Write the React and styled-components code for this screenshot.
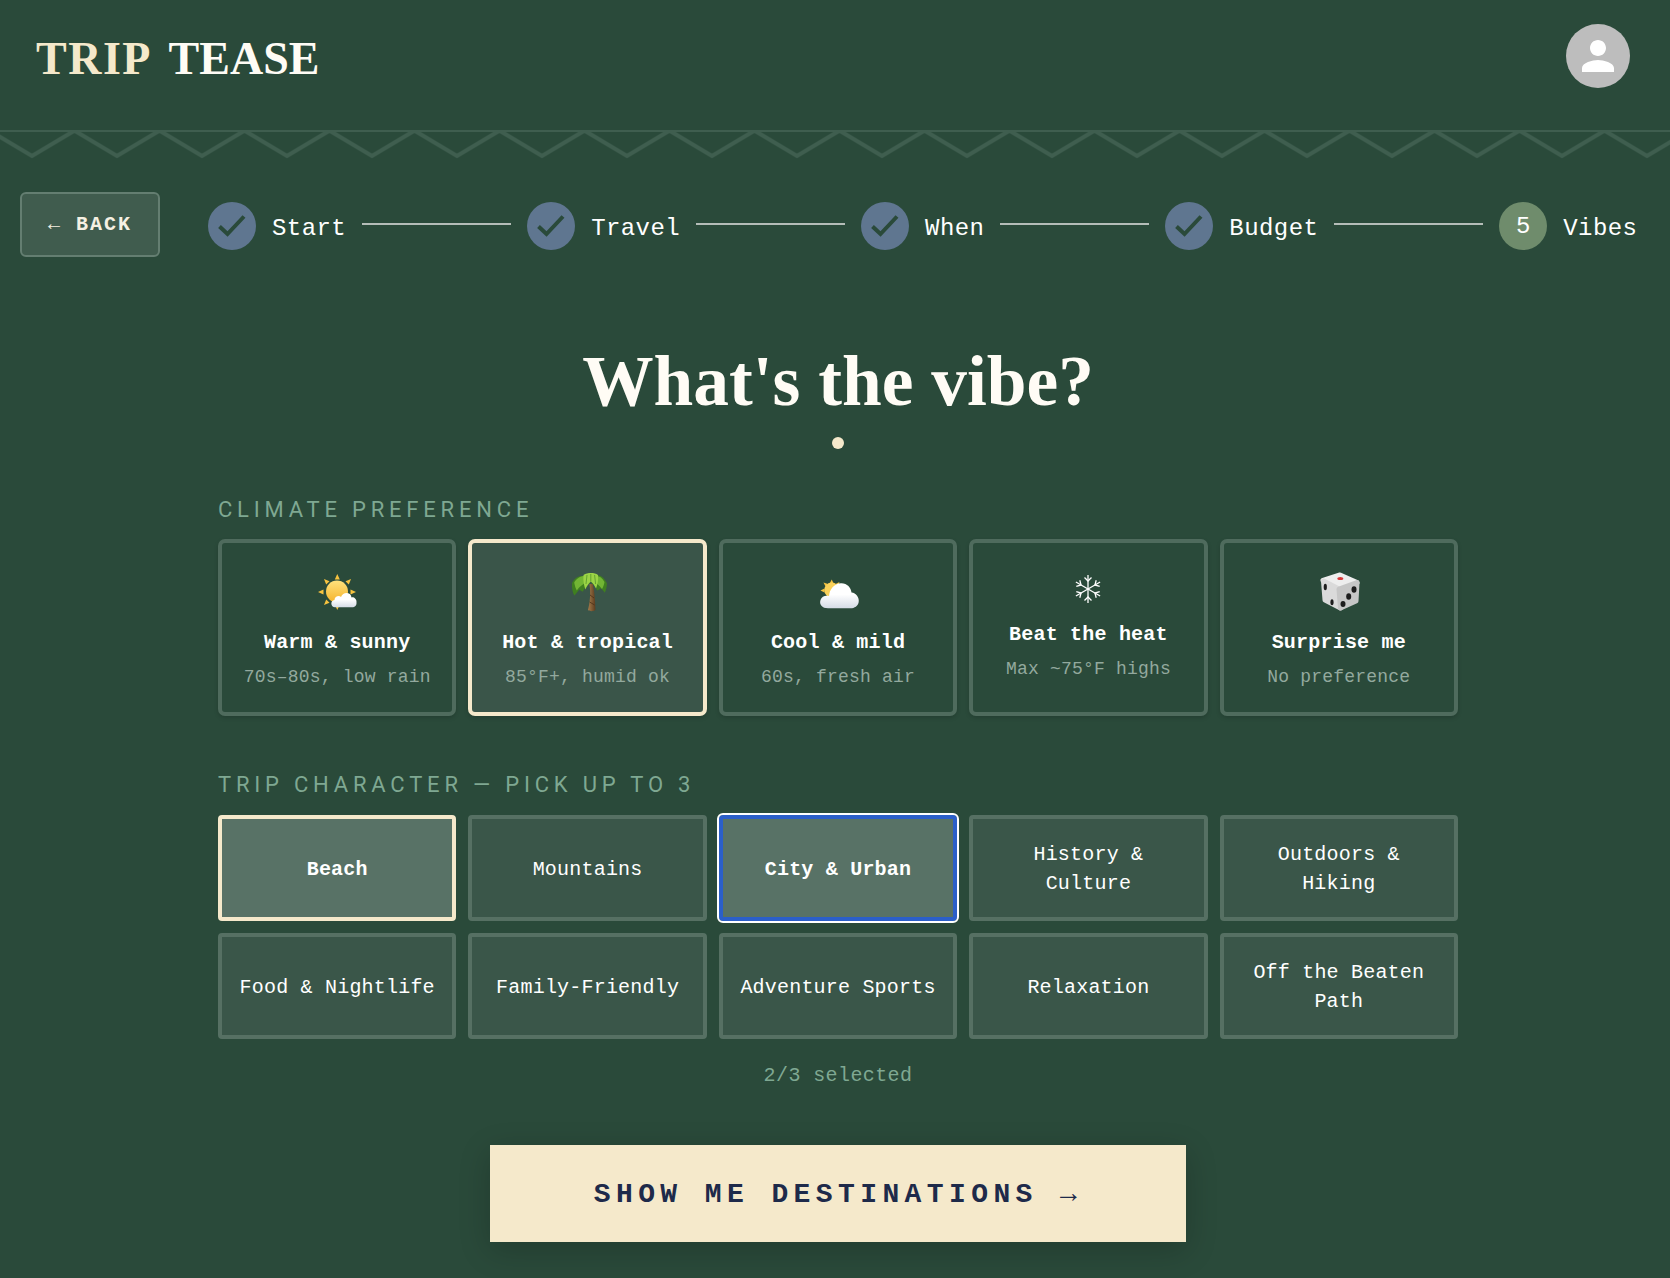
import styled, { createGlobalStyle } from "styled-components";

const MONO = '"Liberation Mono", "DejaVu Sans Mono", monospace';
const SERIF = '"Liberation Serif", serif';

const CloudDefs = ({ id }) => (
  <linearGradient id={id} x1="0" y1="0" x2="0" y2="1">
    <stop offset="0.45" stopColor="#ffffff" />
    <stop offset="1" stopColor="#d5dce6" />
  </linearGradient>
);

const SunCloudIcon = () => (
  <svg width="60" height="55" viewBox="-3 0 60 55">
    <defs>
      <linearGradient id="sunA" x1="0" y1="0" x2="0" y2="1">
        <stop offset="0" stopColor="#ffe27d" />
        <stop offset="1" stopColor="#f5b32b" />
      </linearGradient>
      <CloudDefs id="cloudA" />
    </defs>
    <g fill="#f7c33f">
      <path d="M27.3 9 L24.8 14.5 L29.8 14.5Z" />
      <path d="M14 14 L16.2 19.5 L19.5 16.2Z" />
      <path d="M41 14 L35.5 16.2 L38.8 19.5Z" />
      <path d="M8 27 L13.5 24.5 L13.5 29.5Z" />
      <path d="M46 27 L40.5 24.5 L40.5 29.5Z" />
      <path d="M14 40 L19.5 37.8 L16.2 34.5Z" />
      <path d="M27.3 45 L24.8 39.5 L29.8 39.5Z" />
    </g>
    <circle cx="27" cy="26.5" r="11" fill="url(#sunA)" />
    <path
      d="M25 42.3 C20.5 42.3 20 35.5 24.5 35 C24.5 31.5 29 30 31 32 C33 26.5 41 27 41.5 32.5 C43 31.5 47 33.5 46.5 37.5 C46.8 40.5 45 42.3 42 42.3Z"
      fill="url(#cloudA)"
    />
  </svg>
);

const PalmIcon = () => (
  <svg width="60" height="55" viewBox="-3 0 60 55">
    <defs>
      <linearGradient id="trunk" x1="0" y1="0" x2="1" y2="0">
        <stop offset="0" stopColor="#a57c4b" />
        <stop offset="1" stopColor="#5c3c1f" />
      </linearGradient>
    </defs>
    <path d="M28.4 19 C30 28 28.8 38 27 45 C28.6 46.6 32.5 46.6 34.4 45 C34.2 36 33.6 27 31.8 19Z" fill="url(#trunk)" />
    <path d="M29 30 L33 33 M28.6 37 L33.6 40" stroke="#4a3018" strokeWidth="0.8" fill="none" />
    <path d="M28 13 C21 9 14.5 11 11 18 C10.6 23 11.6 27.5 13.3 30.4 C15.5 28.5 17 26 18.5 24.5 C20 26 21 26.5 22 26.6 C23.5 23 26 20 29 18Z" fill="#3f7f20" />
    <path d="M28 12 C22 9.5 16.5 12 13.2 17.5 C13.8 20.5 14.6 23.5 15.8 25.5 C18 22 23 18 28 16Z" fill="#72b534" />
    <path d="M31 13 C36 8 42 10 46 18.5 C45.8 22 45 25 43.8 27.8 C42.2 25.5 40.8 24 39.5 23.2 C38.5 24.5 37.2 25.2 36 25.4 C35 22 33 19.5 30.5 18Z" fill="#3f7f20" />
    <path d="M31 12.5 C36 9.5 40.5 11.5 43.5 17 C43 20 42 22.5 41 24 C38.5 20.5 35 17.5 31 16Z" fill="#72b534" />
    <path d="M22.5 10 C26.5 7.4 33.5 7.4 37 10 C37.6 15 36.5 19.5 35 23.5 C33.8 21 32.2 18.5 29.8 16.5 C27.4 18.5 25.6 21.5 24.4 24.5 C22.8 20 22 15 22.5 10Z" fill="#9bd346" />
    <path d="M29.8 9 L29.8 16.5 M26 10 L25 19 M33.6 10 L34.6 19" stroke="#5c9e2c" strokeWidth="0.9" fill="none" />
  </svg>
);

const CloudSunIcon = () => (
  <svg width="60" height="55" viewBox="-3 0 60 55">
    <defs>
      <CloudDefs id="cloudB" />
    </defs>
    <g fill="#f7c33f">
      <path d="M20.7 14.5 L18.7 18.5 L22.7 18.5Z" />
      <path d="M12.5 17.5 L14.5 21.5 L17 19Z" />
      <path d="M28.5 17 L24.5 19 L27 21.5Z" />
      <path d="M9.5 25.5 L13.5 23.5 L13.5 27.5Z" />
    </g>
    <circle cx="20.7" cy="25" r="7.5" fill="#fbd25a" />
    <path
      d="M17 43.3 C11 43.3 8 39.5 9.5 35 C10.5 31.5 14.5 30 18 31 C18.5 24.5 23 18.5 30 18.2 C36 18 40 22.5 40.5 27.5 C45 28 48.5 32.5 47.7 37 C47 41 43.5 43.3 39.5 43.3Z"
      fill="url(#cloudB)"
    />
  </svg>
);

const SnowIcon = () => (
  <svg width="30" height="37" viewBox="0 0 30 37" fill="none" stroke="#fff" strokeWidth="1.3">
    {[0, 60, 120].map((a) => (
      <g key={a} transform={`rotate(${a} 15 15)`}>
        <path d="M15 1 V29" />
        <path d="M11.5 3.5 L15 7 L18.5 3.5" />
        <path d="M11.5 26.5 L15 23 L18.5 26.5" />
      </g>
    ))}
  </svg>
);

const DiceIcon = () => (
  <svg width="60" height="55" viewBox="-3 0 60 55">
    <g strokeLinejoin="round" strokeWidth="5">
      <path d="M28 10 L11 15.5 L27 24 L45 17.5Z" fill="#eeeeee" stroke="#eeeeee" />
      <path d="M11.5 16 L27 24 L28.5 43 L13 35Z" fill="#dadada" stroke="#dadada" />
      <path d="M27 24 L45 17.5 L44 36 L28.5 43Z" fill="#c6c6c6" stroke="#c6c6c6" />
    </g>
    <ellipse cx="28.3" cy="13.5" rx="3" ry="1.6" fill="#d93a3a" />
    <g fill="#1d1d1d">
      <ellipse cx="13.3" cy="22" rx="1.6" ry="3.2" />
      <ellipse cx="20" cy="37.3" rx="1.6" ry="3" />
      <ellipse cx="42" cy="24.5" rx="2.5" ry="3.2" />
      <ellipse cx="36.7" cy="31.5" rx="2.5" ry="3.2" />
      <ellipse cx="31" cy="39" rx="2.5" ry="3" />
    </g>
  </svg>
);

const steps = ["Start", "Travel", "When", "Budget"];

const climates = [
  { icon: <SunCloudIcon />, title: "Warm & sunny", sub: "70s–80s, low rain" },
  { icon: <PalmIcon />, title: "Hot & tropical", sub: "85°F+, humid ok", selected: true },
  { icon: <CloudSunIcon />, title: "Cool & mild", sub: "60s, fresh air" },
  { icon: <SnowIcon />, title: "Beat the heat", sub: "Max ~75°F highs", small: true },
  { icon: <DiceIcon />, title: "Surprise me", sub: "No preference" },
];

const characters = [
  { label: "Beach", selected: true },
  { label: "Mountains" },
  { label: "City & Urban", selected: true, focused: true },
  { label: "History & Culture" },
  { label: "Outdoors & Hiking" },
  { label: "Food & Nightlife" },
  { label: "Family-Friendly" },
  { label: "Adventure Sports" },
  { label: "Relaxation" },
  { label: "Off the Beaten Path" },
];

const App = () => {
  return (
    <>
      <GlobalStyle />
      <Header>
        <Logo>
          <LogoAccent>TRIP</LogoAccent> TEASE
        </Logo>
        <Avatar>
          <svg width="48" height="48" viewBox="0 0 24 24" fill="#fff">
            <path d="M12 12c2.21 0 4-1.79 4-4s-1.79-4-4-4-4 1.79-4 4 1.79 4 4 4zm0 2c-2.67 0-8 1.34-8 4v2h16v-2c0-2.66-5.33-4-8-4z" />
          </svg>
        </Avatar>
      </Header>
      <ZigzagStrip>
        <svg width="100%" height="28">
          <defs>
            <pattern id="zig" width="85" height="28" x="-10.5" patternUnits="userSpaceOnUse">
              <path d="M-2 -1.6 L42.5 25 L87 -1.6" fill="none" stroke="#3f5e4f" strokeWidth="4" />
            </pattern>
          </defs>
          <rect width="100%" height="28" fill="url(#zig)" />
        </svg>
      </ZigzagStrip>

      <StepperRow>
        <BackButton>← BACK</BackButton>
        <Stepper>
          {steps.map((s) => (
            <Step key={s}>
              <StepCircle>
                <svg width="28" height="22" viewBox="0 0 28 22" fill="none">
                  <path d="M1.5 11.5 L9.5 19 L26 1.5" stroke="#2a4a3a" strokeWidth="4" />
                </svg>
              </StepCircle>
              <StepLabel>{s}</StepLabel>
              <StepLine />
            </Step>
          ))}
          <StepCircle $active>5</StepCircle>
          <StepLabel>Vibes</StepLabel>
        </Stepper>
      </StepperRow>

      <Main>
        <Title>What's the vibe?</Title>
        <Dot />

        <SectionLabel>CLIMATE PREFERENCE</SectionLabel>
        <CardGrid>
          {climates.map((c) => (
            <ClimateCard key={c.title} $selected={c.selected}>
              <CardIcon $small={c.small}>{c.icon}</CardIcon>
              <CardTitle>{c.title}</CardTitle>
              <CardSub>{c.sub}</CardSub>
            </ClimateCard>
          ))}
        </CardGrid>

        <CharacterLabel>TRIP CHARACTER — PICK UP TO 3</CharacterLabel>
        <ChipGrid>
          {characters.map((c) => (
            <Chip key={c.label} $selected={c.selected} $focused={c.focused}>
              {c.label}
            </Chip>
          ))}
        </ChipGrid>
        <Counter>2/3 selected</Counter>
        <CtaButton>SHOW ME DESTINATIONS →</CtaButton>
      </Main>
    </>
  );
};

const GlobalStyle = createGlobalStyle`
  html, body {
    margin: 0;
    padding: 0;
    background: #2a4a3a;
    color: #fff;
    font-family: ${MONO};
  }
  * {
    box-sizing: border-box;
  }
`;

const Header = styled.header`
  display: flex;
  align-items: center;
  justify-content: space-between;
  height: 132px;
  padding: 0 40px 18px 36px;
  border-bottom: 2px solid #3f5e4f;
`;

const Logo = styled.div`
  margin-top: 4px;
  font-family: ${SERIF};
  font-weight: 700;
  font-size: 46px;
  word-spacing: 6px;
  color: #fffcf5;
`;

const LogoAccent = styled.span`
  letter-spacing: 1.5px;
  color: #f5e9cb;
`;

const Avatar = styled.div`
  display: flex;
  align-items: center;
  justify-content: center;
  width: 64px;
  height: 64px;
  border-radius: 50%;
  background: #bdbdbd;
`;

const ZigzagStrip = styled.div`
  height: 28px;
  margin-top: -1px;
  svg {
    display: block;
  }
`;

const StepperRow = styled.div`
  display: flex;
  align-items: center;
  gap: 48px;
  margin-top: 33px;
  padding: 0 20px;
`;

const BackButton = styled.button`
  flex: none;
  width: 140px;
  height: 65px;
  border: 2px solid #647e71;
  border-radius: 6px;
  background: #405c4e;
  color: #f5f0e2;
  font-family: ${MONO};
  font-weight: 700;
  font-size: 20px;
  letter-spacing: 2px;
`;

const Stepper = styled.div`
  display: flex;
  align-items: center;
  gap: 16px;
  padding-top: 2px;
`;

const Step = styled.div`
  display: flex;
  flex: none;
  align-items: center;
  gap: 16px;
`;

const StepCircle = styled.div`
  display: flex;
  flex: none;
  align-items: center;
  justify-content: center;
  width: 48px;
  height: 48px;
  padding-top: ${(p) => (p.$active ? "2px" : "0")};
  border-radius: 50%;
  background: ${(p) => (p.$active ? "#6f8c6c" : "#5f7690")};
  font-size: 24px;
  color: #fff;
`;

const StepLabel = styled.span`
  padding-top: 6px;
  font-size: 24px;
  letter-spacing: 0.42px;
  color: #fff;
`;

const StepLine = styled.div`
  flex: none;
  width: 149px;
  height: 2px;
  margin-bottom: 4px;
  background: #b5bdb8;
`;

const Main = styled.main`
  display: flex;
  flex-direction: column;
  align-items: stretch;
  width: 1458px;
  padding: 0 0 0 218px;
`;

const Title = styled.h1`
  margin: 74px 0 0;
  font-family: ${SERIF};
  font-weight: 700;
  font-size: 71.4px;
  line-height: 100px;
  text-align: center;
  color: #fffcf5;
`;

const Dot = styled.div`
  width: 12px;
  height: 12px;
  margin: 6px auto 0;
  border-radius: 50%;
  background: #f5e9cb;
`;

const SectionLabel = styled.div`
  margin-top: 48px;
  margin-bottom: 16px;
  font-family: Roboto, sans-serif;
  font-size: 22px;
  font-weight: 400;
  line-height: 26px;
  letter-spacing: 4.8px;
  color: #7fa892;
`;

const CharacterLabel = styled(SectionLabel)`
  margin-top: 56px;
  margin-bottom: 17px;
`;

const CardGrid = styled.div`
  display: grid;
  grid-template-columns: repeat(5, 1fr);
  gap: 12px;
`;

const ClimateCard = styled.div`
  display: flex;
  flex-direction: column;
  align-items: center;
  justify-content: center;
  height: 177px;
  border: 4px solid ${(p) => (p.$selected ? "#f5e9cb" : "#4f6b5d")};
  border-radius: 7px;
  background: ${(p) => (p.$selected ? "#3a5549" : "transparent")};
  box-shadow: 0 2px 4px rgba(0, 0, 0, 0.15);
`;

const CardIcon = styled.div`
  display: flex;
  align-items: center;
  justify-content: center;
  height: ${(p) => (p.$small ? "37px" : "53px")};
`;

const CardTitle = styled.div`
  margin-top: 10px;
  font-size: 20px;
  font-weight: 700;
  line-height: 28px;
  letter-spacing: 0.2px;
  color: #fff;
`;

const CardSub = styled.div`
  margin-top: 7px;
  font-size: 18px;
  line-height: 26px;
  letter-spacing: 0.2px;
  color: #93a99e;
`;

const ChipGrid = styled.div`
  display: grid;
  grid-template-columns: repeat(5, 1fr);
  grid-auto-rows: 106px;
  gap: 12px;
`;

const Chip = styled.button`
  padding: 2px 14px 0;
  border: 4px solid ${(p) => (p.$focused ? "#2b5fc9" : p.$selected ? "#f5e9cb" : "#567063")};
  border-radius: 4px;
  background: ${(p) => (p.$selected ? "#587266" : "#3a5649")};
  color: #fff;
  font-family: ${MONO};
  font-size: 20px;
  font-weight: ${(p) => (p.$selected ? 700 : 400)};
  line-height: 29px;
  letter-spacing: 0.2px;
  outline: ${(p) => (p.$focused ? "2px solid #fff" : "none")};
  outline-offset: 0;
`;

const Counter = styled.div`
  margin-top: 23px;
  font-size: 20px;
  line-height: 28px;
  letter-spacing: 0.4px;
  text-align: center;
  color: #7fa892;
`;

const CtaButton = styled.button`
  align-self: center;
  width: 696px;
  height: 97px;
  margin: 55px 0 36px;
  padding-top: 3px;
  border: none;
  background: #f5e9cb;
  color: #1e2a4a;
  font-family: ${MONO};
  font-size: 28px;
  font-weight: 700;
  letter-spacing: 5.4px;
  box-shadow: 0 8px 32px rgba(0, 0, 0, 0.2);
`;

export default App;
